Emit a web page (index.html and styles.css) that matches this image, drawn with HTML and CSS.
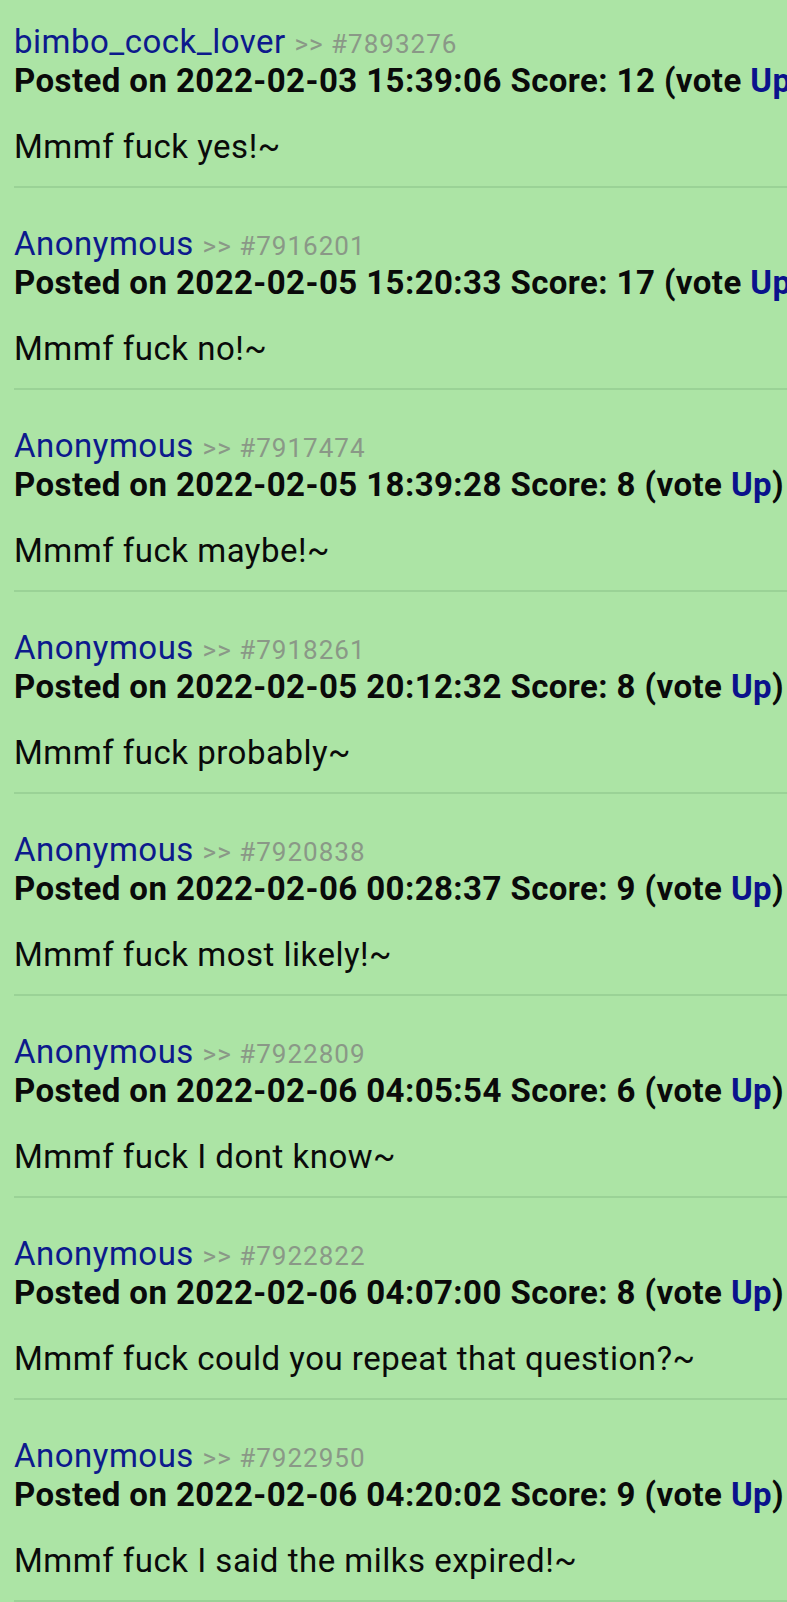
FILE: index.html
```html
<!DOCTYPE html>
<html lang="en">
<head>
<meta charset="utf-8">
<title>Comments</title>
<link rel="stylesheet" href="styles.css">
</head>
<body>
<div class="comments">
  <div class="post">
    <div class="who"><span class="name">bimbo_cock_lover</span> <span class="id">&gt;&gt; #7893276</span></div>
    <div class="meta">Posted on 2022-02-03 15:39:06 Score: 12 (vote <span class="up">Up</span>)</div>
    <div class="text">Mmmf fuck yes!~</div>
  </div>
  <div class="post">
    <div class="who"><span class="name">Anonymous</span> <span class="id">&gt;&gt; #7916201</span></div>
    <div class="meta">Posted on 2022-02-05 15:20:33 Score: 17 (vote <span class="up">Up</span>)</div>
    <div class="text">Mmmf fuck no!~</div>
  </div>
  <div class="post">
    <div class="who"><span class="name">Anonymous</span> <span class="id">&gt;&gt; #7917474</span></div>
    <div class="meta">Posted on 2022-02-05 18:39:28 Score: 8 (vote <span class="up">Up</span>)</div>
    <div class="text">Mmmf fuck maybe!~</div>
  </div>
  <div class="post">
    <div class="who"><span class="name">Anonymous</span> <span class="id">&gt;&gt; #7918261</span></div>
    <div class="meta">Posted on 2022-02-05 20:12:32 Score: 8 (vote <span class="up">Up</span>)</div>
    <div class="text">Mmmf fuck probably~</div>
  </div>
  <div class="post">
    <div class="who"><span class="name">Anonymous</span> <span class="id">&gt;&gt; #7920838</span></div>
    <div class="meta">Posted on 2022-02-06 00:28:37 Score: 9 (vote <span class="up">Up</span>)</div>
    <div class="text">Mmmf fuck most likely!~</div>
  </div>
  <div class="post">
    <div class="who"><span class="name">Anonymous</span> <span class="id">&gt;&gt; #7922809</span></div>
    <div class="meta">Posted on 2022-02-06 04:05:54 Score: 6 (vote <span class="up">Up</span>)</div>
    <div class="text">Mmmf fuck I dont know~</div>
  </div>
  <div class="post">
    <div class="who"><span class="name">Anonymous</span> <span class="id">&gt;&gt; #7922822</span></div>
    <div class="meta">Posted on 2022-02-06 04:07:00 Score: 8 (vote <span class="up">Up</span>)</div>
    <div class="text">Mmmf fuck could you repeat that question?~</div>
  </div>
  <div class="post">
    <div class="who"><span class="name">Anonymous</span> <span class="id">&gt;&gt; #7922950</span></div>
    <div class="meta">Posted on 2022-02-06 04:20:02 Score: 9 (vote <span class="up">Up</span>)</div>
    <div class="text">Mmmf fuck I said the milks expired!~</div>
  </div>
</div>
</body>
</html>
```

FILE: styles.css
```css
html, body {
  margin: 0;
  padding: 0;
  background: #ace4a5;
  overflow: hidden;
}

body {
  font-family: Roboto, "Noto Sans", "Liberation Sans", sans-serif;
  color: #0a0a0a;
}

.comments {
  padding-left: 14px;
}

.post {
  padding-top: 36px;
  border-bottom: 2px solid #9ad296;
  white-space: nowrap;
  letter-spacing: 0.5px;
}

.post:first-child {
  padding-top: 22px;
}

.who {
  font-size: 33px;
  line-height: 39px;
}

.name {
  color: #0d1a8c;
}

.id {
  font-size: 26px;
  line-height: 20px;
  letter-spacing: 1px;
  color: #8a9887;
}

.meta {
  font-size: 33px;
  line-height: 40px;
  font-weight: 700;
  letter-spacing: 0.42px;
}

.up {
  color: #0a128c;
}

.text {
  font-size: 33px;
  line-height: 40px;
  margin-top: 26px;
  margin-bottom: 19px;
}
```
